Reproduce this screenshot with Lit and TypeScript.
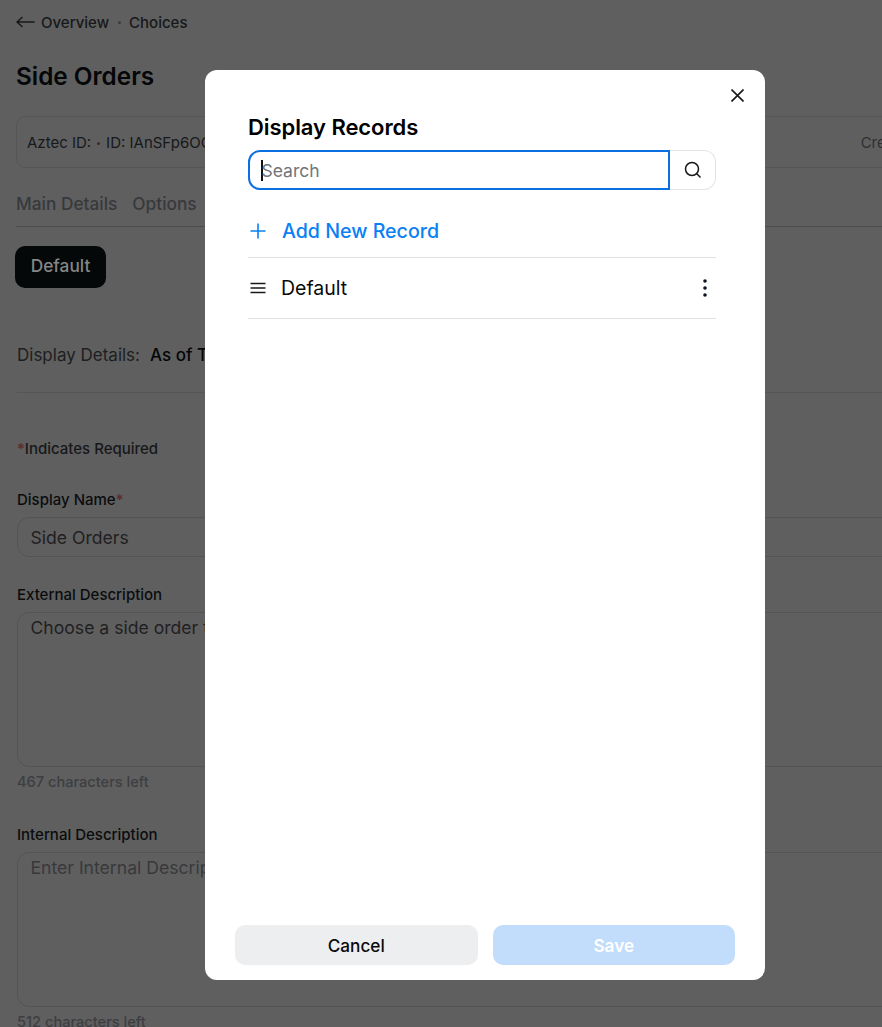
import { LitElement, html, css } from 'lit';
import { customElement } from 'lit/decorators.js';

@customElement('dimmed-page')
export class DimmedPage extends LitElement {
  static styles = css`
    :host {
      display: block;
      width: 1000px;
      height: 1040px;
      box-sizing: border-box;
      padding: 13px 0 0 16px;
      background: #5f5f5f;
      color: #050608;
      font-family: Inter, sans-serif;
    }

    .crumbs {
      display: flex;
      align-items: center;
      height: 18px;
      font-size: 15px;
      font-weight: 500;
      color: #17181a;
    }

    .crumbs svg {
      margin-right: 6px;
    }

    .crumbs .dot {
      width: 3px;
      height: 3px;
      margin: 0 8.500px;
      border-radius: 50%;
      background: #3d3e40;
    }

    h1 {
      margin: 27px 0 0;
      font-size: 24.300px;
      line-height: 36px;
      font-weight: 600;
      color: #050608;
    }

    .info {
      display: flex;
      align-items: center;
      justify-content: space-between;
      box-sizing: border-box;
      width: 984px;
      height: 52px;
      margin-top: 22px;
      padding: 0 82px 0 10px;
      border: 1px solid #555;
      border-radius: 10px;
      font-size: 15px;
      color: #17181a;
    }

    .info .dot {
      display: inline-block;
      width: 3px;
      height: 3px;
      margin: 0 6px 3px 6px;
      border-radius: 50%;
      background: #43282a;
    }

    .info .created {
      color: #2e3033;
    }

    .tabs {
      display: flex;
      gap: 15px;
      height: 59px;
      align-items: flex-end;
      padding-bottom: 10px;
      box-sizing: border-box;
      border-bottom: 1px solid #4d4d4d;
      font-size: 17.300px;
      line-height: 24px;
      font-weight: 500;
      color: #37393d;
    }

    .record-btn {
      display: flex;
      align-items: center;
      justify-content: center;
      box-sizing: border-box;
      width: 91px;
      height: 42px;
      margin: 19px 0 0 -1px;
      padding-bottom: 3px;
      border-radius: 10px;
      background: #050809;
      color: #858686;
      font-size: 17.300px;
      font-weight: 500;
    }

    .body {
      padding-left: 1px;
    }

    .details {
      display: flex;
      align-items: center;
      gap: 10px;
      height: 38px;
      margin-top: 48px;
      font-size: 17px;
      color: #1d1e20;
    }

    .details b {
      font-weight: 500;
      color: #050608;
    }

    .rule {
      height: 1px;
      margin-top: 18px;
      background: #555;
    }

    .required {
      margin-top: 47px;
      font-size: 15px;
      line-height: 18px;
      font-weight: 500;
      color: #17181a;
    }

    .star {
      color: #5c2a28;
    }

    label {
      display: block;
      font-size: 15px;
      line-height: 18px;
      font-weight: 500;
      color: #0b0c0e;
    }

    .gap-name {
      margin-top: 33px;
    }

    .gap-external {
      margin-top: 29px;
    }

    .gap-internal {
      margin-top: 35px;
    }

    .field {
      box-sizing: border-box;
      margin-top: 8px;
      padding: 9px 13px 9px 12.500px;
      border: 1px solid #545454;
      border-radius: 12px;
      font-size: 17.600px;
      line-height: 21px;
      color: #1f2022;
    }

    .name {
      height: 40px;
    }

    .area {
      height: 155px;
      padding-top: 4px;
    }

    .placeholder {
      color: #38393c;
    }

    .count {
      margin-top: 7px;
      font-size: 14.600px;
      line-height: 17px;
      font-weight: 500;
      color: #3d3e41;
    }
  `;

  render() {
    return html`
      <nav class="crumbs">
        <svg width="19" height="12" viewBox="0 0 19 12" fill="none" stroke="#17181a" stroke-width="1.400">
          <path d="M18.500 6H1M6.500 1 1 6l5.500 5" />
        </svg>
        <span>Overview</span><span class="dot"></span><span>Choices</span>
      </nav>
      <h1>Side Orders</h1>
      <div class="info">
        <span>Aztec ID:<span class="dot"></span>ID: IAnSFp6OQ</span>
        <span class="created">Created</span>
      </div>
      <div class="tabs"><span>Main Details</span><span>Options</span></div>
      <div class="record-btn">Default</div>
      <div class="body">
        <div class="details"><span>Display Details:</span><b>As of Today</b></div>
        <div class="rule"></div>
        <div class="required"><span class="star">*</span>Indicates Required</div>
        <label class="gap-name">Display Name<span class="star">*</span></label>
        <div class="field name">Side Orders</div>
        <label class="gap-external">External Description</label>
        <div class="field area">Choose a side order to go with your meal</div>
        <div class="count">467 characters left</div>
        <label class="gap-internal">Internal Description</label>
        <div class="field area placeholder">Enter Internal Description</div>
        <div class="count">512 characters left</div>
      </div>
    `;
  }
}

@customElement('records-modal')
export class RecordsModal extends LitElement {
  static styles = css`
    :host {
      position: absolute;
      left: 205px;
      top: 70px;
      display: flex;
      flex-direction: column;
      box-sizing: border-box;
      width: 560px;
      height: 910px;
      padding: 43px 49px 15px 43px;
      border-radius: 12px;
      background: #fff;
      color: #000;
      font-family: Inter, sans-serif;
    }

    .close {
      position: absolute;
      top: 18.500px;
      right: 21px;
      display: block;
    }

    h2 {
      margin: 0;
      font-size: 22px;
      line-height: 28px;
      font-weight: 600;
      letter-spacing: -0.070px;
    }

    .search {
      display: flex;
      height: 40px;
      margin-top: 9px;
    }

    .input {
      flex: 1;
      display: flex;
      align-items: center;
      box-sizing: border-box;
      padding-left: 11px;
      border: 2px solid #0a6fe0;
      border-radius: 12px 0 0 12px;
      font-size: 17.500px;
      color: #70757c;
    }

    .caret {
      width: 2px;
      height: 21px;
      margin-right: -1.500px;
      background: #111;
    }

    .search-btn {
      display: flex;
      align-items: center;
      justify-content: center;
      box-sizing: border-box;
      width: 46px;
      border: 1px solid #e3e4e6;
      border-left: 0;
      border-radius: 0 12px 12px 0;
    }

    .add {
      display: flex;
      align-items: center;
      gap: 16px;
      height: 68px;
      box-sizing: border-box;
      padding: 15px 0 0 2px;
      border-bottom: 1px solid #e0e1e3;
      font-size: 19.600px;
      font-weight: 500;
      color: #0a80f5;
    }

    .row {
      display: flex;
      align-items: center;
      height: 61px;
      box-sizing: border-box;
      padding-left: 2px;
      border-bottom: 1px solid #e0e1e3;
      font-size: 19.500px;
      color: #0a0a0a;
    }

    .row span {
      flex: 1;
      margin-left: 15px;
    }

    .more {
      margin-right: 9px;
    }

    .footer {
      display: flex;
      gap: 15px;
      margin: auto -19px 0 -13px;
    }

    .footer div {
      flex: 1;
      display: flex;
      align-items: center;
      justify-content: center;
      height: 40px;
      border-radius: 10px;
      font-size: 17.200px;
      font-weight: 500;
    }

    .cancel {
      background: #edeef0;
      color: #0a0a0a;
    }

    .footer .save {
      background: #c2dcfb;
      color: #fff;
      font-weight: 600;
    }
  `;

  render() {
    return html`
      <svg class="close" width="13" height="13" viewBox="0 0 13 13" fill="none" stroke="#17181a" stroke-width="1.600">
        <path d="M0.500 0.500l12 12M12.500 0.500l-12 12" />
      </svg>
      <h2>Display Records</h2>
      <div class="search">
        <div class="input"><i class="caret"></i>Search</div>
        <div class="search-btn">
          <svg width="18" height="18" viewBox="0 0 18 18" fill="none" stroke="#17181a" stroke-width="1.500">
            <circle cx="8" cy="8" r="6.500" />
            <path d="M12.800 12.800 16.500 16.500" />
          </svg>
        </div>
      </div>
      <div class="add">
        <svg width="16" height="16" viewBox="0 0 16 16" fill="none" stroke="#0a80f5" stroke-width="1.600">
          <path d="M8 0.500v15M0.500 8h15" />
        </svg>
        Add New Record
      </div>
      <div class="row">
        <svg width="16" height="12" viewBox="0 0 16 12" fill="none" stroke="#17181a" stroke-width="1.600">
          <path d="M0.500 1.500h15M0.500 6h15M0.500 10.500h15" />
        </svg>
        <span>Default</span>
        <svg class="more" width="4" height="18" viewBox="0 0 4 18" fill="#0d1420">
          <circle cx="2" cy="2" r="1.800" /><circle cx="2" cy="9" r="1.800" /><circle cx="2" cy="16" r="1.800" />
        </svg>
      </div>
      <div class="footer">
        <div class="cancel">Cancel</div>
        <div class="save">Save</div>
      </div>
    `;
  }
}

@customElement('app-root')
export class AppRoot extends LitElement {
  static styles = css`
    :host {
      display: block;
      position: relative;
      width: 882px;
      height: 1027px;
      overflow: hidden;
    }
  `;

  render() {
    return html`<dimmed-page></dimmed-page><records-modal></records-modal>`;
  }
}
